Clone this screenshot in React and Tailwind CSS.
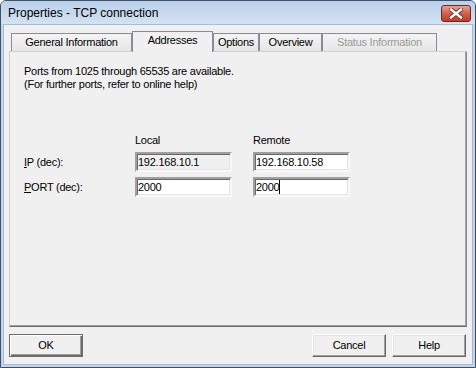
import React from "react";

const font = { fontFamily: '"Liberation Sans", Arial, sans-serif' };

const Field = ({ value, disabled, caret }) => (
  <div
    className={`h-[20px] w-[97px] border-2 border-t-[#a0a0a0] border-l-[#a0a0a0] border-r-[#f8f8f8] border-b-[#f8f8f8] shadow-[inset_1px_1px_0_#696969,inset_-1px_-1px_0_#e3e3e3] flex items-center pl-[1px] text-[11px] leading-[13px] ${
      disabled ? "bg-[#f0f0f0]" : "bg-white"
    }`}
  >
    <span>{value}</span>
    {caret && <span className="inline-block w-[1px] h-[14px] bg-black" />}
  </div>
);

const Tab = ({ label, width, active, disabled }) => (
  <div
    className={`flex items-center justify-center border border-b-0 border-[#898c95] text-[11px] ${
      active
        ? "h-[21px] bg-[#f0f0f0] -mb-[1px] relative z-10 pb-[3px]"
        : "h-[18px] bg-gradient-to-b from-[#f4f4f4] to-[#e6e6e6]"
    } ${disabled ? "text-[#9a9a9a]" : "text-black"}`}
    style={{ width }}
  >
    {label}
  </div>
);

const Button = ({ children, isDefault }) => (
  <button
    className={`w-[74px] h-[23px] text-[11px] bg-[#f0f0f0] border ${
      isDefault
        ? "border-[#6d6d6d] shadow-[inset_1px_1px_0_#ffffff,inset_-1px_-1px_0_#696969,inset_-2px_-2px_0_#a0a0a0]"
        : "border-t-white border-l-white border-r-[#696969] border-b-[#696969] shadow-[inset_-1px_-1px_0_#a0a0a0,inset_1px_1px_0_#e3e3e3]"
    }`}
  >
    {children}
  </button>
);

export default function App() {
  return (
    <div
      className="w-[476px] h-[368px] flex flex-col bg-[#c2d5ec] border border-[#3f4f66] rounded-t-[6px] overflow-hidden text-black tracking-[-0.25px]"
      style={font}
    >
      {/* Title bar */}
      <div className="h-[23px] flex items-center justify-between pl-[7px] pr-[4px] bg-gradient-to-b from-[#b9cfe9] to-[#d4e2f2]">
        <span className="text-[12px] text-black tracking-[0px]">Properties - TCP connection</span>
        <div className="w-[30px] h-[17px] mt-[2px] rounded-[3px] border border-[#6e2a22] bg-gradient-to-b from-[#e8a296] via-[#d25f4c] to-[#c23b27] flex items-center justify-center">
          <svg width="14" height="11" viewBox="0 0 14 11">
            <path d="M2 1.5 L12 9.5 M12 1.5 L2 9.5" stroke="#6a3028" strokeWidth="4.2" strokeLinecap="square" />
            <path d="M2 1.5 L12 9.5 M12 1.5 L2 9.5" stroke="#ffffff" strokeWidth="2.4" strokeLinecap="square" />
          </svg>
        </div>
      </div>

      {/* Client area */}
      <div className="flex-1 mx-[2px] mb-[2px] bg-[#f0f0f0] border border-[#a7bcd8] flex flex-col px-[5px] pt-[6px] pb-[6px]">
        {/* Tabs */}
        <div className="flex items-end pl-[2px] h-[20px]">
          <Tab label="General Information" width={121} />
          <Tab label="Addresses" width={81} active />
          <Tab label="Options" width={46} />
          <Tab label="Overview" width={63} />
          <Tab label="Status Information" width={115} disabled />
        </div>

        {/* Panel */}
        <div className="h-[276px] border border-[#d0d0d0] border-r-[#898c95] border-b-[#696969] shadow-[inset_-1px_-1px_0_#a0a0a0] bg-[#f0f0f0] pl-[14px] pt-[13px] text-[11px] leading-[13px]">
          <p>Ports from 1025 through 65535 are available.</p>
          <p>(For further ports, refer to online help)</p>

          <div className="mt-[43px] grid grid-cols-[90px_97px_97px] gap-x-[21px] items-center">
            <div />
            <div>Local</div>
            <div>Remote</div>

            <div className="mt-[5px]">
              <span className="underline">I</span>P (dec):
            </div>
            <div className="mt-[5px]">
              <Field value="192.168.10.1" disabled />
            </div>
            <div className="mt-[5px]">
              <Field value="192.168.10.58" />
            </div>

            <div className="mt-[5px]">
              <span className="underline">P</span>ORT (dec):
            </div>
            <div className="mt-[5px]">
              <Field value="2000" />
            </div>
            <div className="mt-[5px]">
              <Field value="2000" caret />
            </div>
          </div>
        </div>

        {/* Buttons */}
        <div className="mt-[7px] flex items-center">
          <Button isDefault>OK</Button>
          <div className="flex-1" />
          <div className="flex gap-[6px] mr-[1px]">
            <Button>Cancel</Button>
            <Button>Help</Button>
          </div>
        </div>
      </div>
    </div>
  );
}
